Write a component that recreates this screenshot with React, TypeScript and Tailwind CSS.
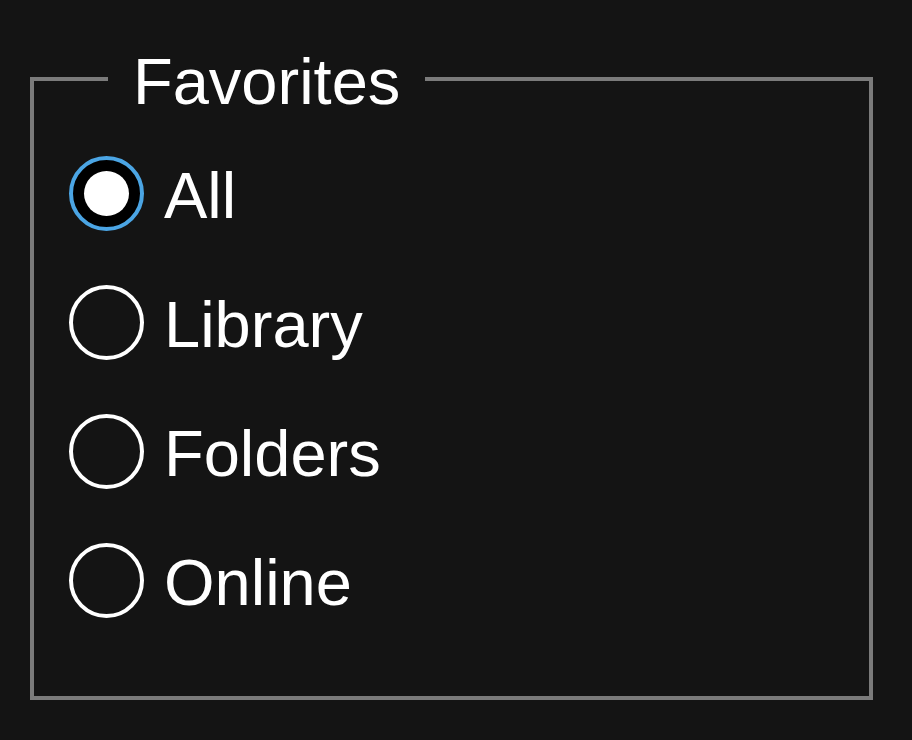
import { useState } from 'react';

const options = ['All', 'Library', 'Folders', 'Online'];

function Radio({ checked }: { checked: boolean }) {
  if (checked) {
    return (
      <div className="flex h-[75px] w-[75px] shrink-0 items-center justify-center rounded-full border-[4px] border-[#4ba5e4] bg-black">
        <div className="h-[45px] w-[45px] rounded-full bg-white" />
      </div>
    );
  }
  return <div className="h-[75px] w-[75px] shrink-0 rounded-full border-[4px] border-white" />;
}

export default function App() {
  const [selected, setSelected] = useState('All');

  return (
    <div
      className="h-[740px] w-[912px] bg-[#141414] pl-[30px] pt-[41px] text-white"
      style={{ fontFamily: '"Liberation Sans", Arial, sans-serif' }}
    >
      <fieldset className="w-[843px] border-[4px] border-[#7b7b7b] pb-[51px] pl-[35px] pt-[12px]">
        <legend className="ml-[39px] px-[25px] pt-[6px] text-[65px] leading-[70px]">Favorites</legend>
        {options.map((opt) => (
          <button
            key={opt}
            onClick={() => setSelected(opt)}
            className="flex h-[129px] items-center gap-[20px] text-left"
          >
            <Radio checked={selected === opt} />
            <span className="mt-[4px] text-[65px] leading-[75px]">{opt}</span>
          </button>
        ))}
      </fieldset>
    </div>
  );
}
